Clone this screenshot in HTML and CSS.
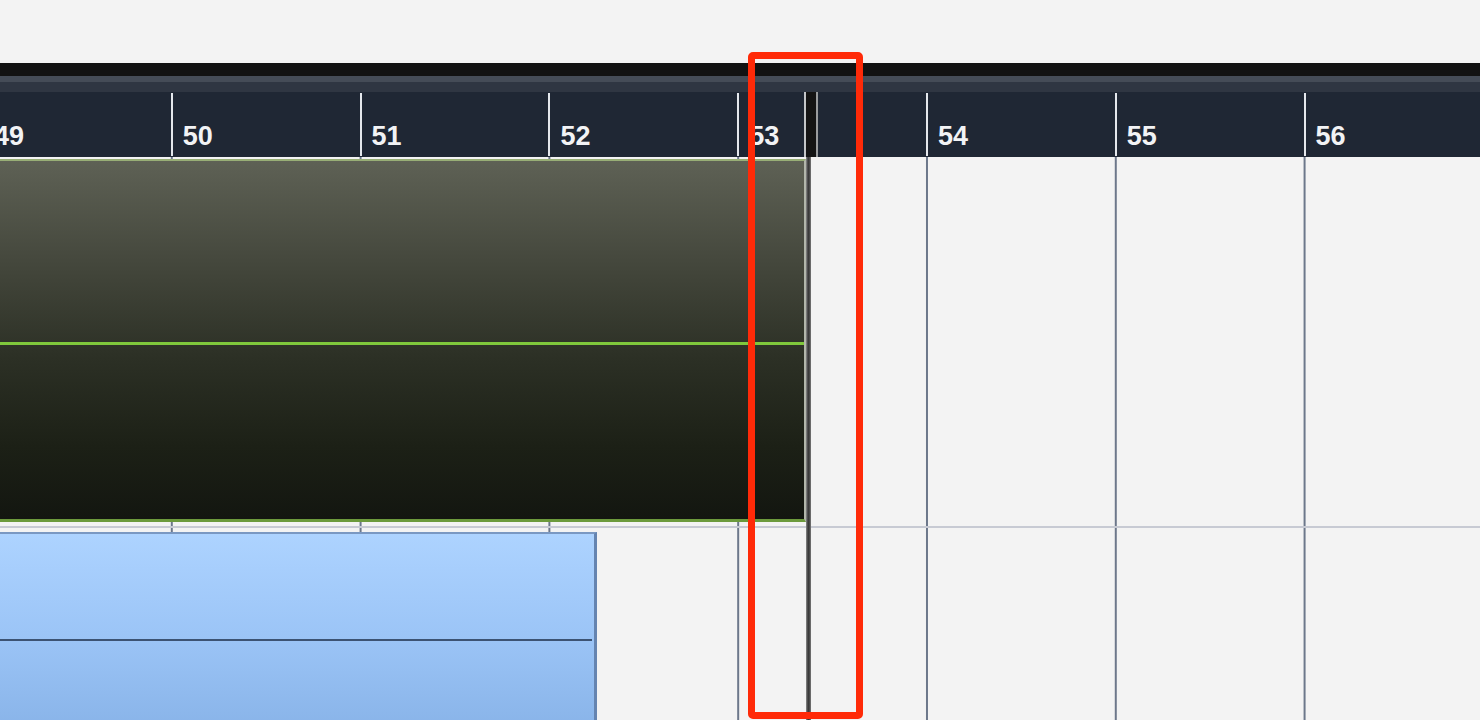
FILE: index.html
```html
<!DOCTYPE html>
<html lang="en">
<head>
    <meta charset="UTF-8">
    <title>Arrange</title>
    <link rel="stylesheet" href="styles.css">
</head>
<body>
    <div class="arrange">
        <div class="toolbar"></div>
        <div class="ruler-head"></div>

        <div class="ruler">
            <div class="bar"><span>49</span></div>
            <div class="bar"><span>50</span></div>
            <div class="bar"><span>51</span></div>
            <div class="bar"><span>52</span></div>
            <div class="bar"><span>53</span></div>
            <div class="bar"><span>54</span></div>
            <div class="bar"><span>55</span></div>
            <div class="bar"><span>56</span></div>
        </div>

        <div class="tracks">
            <!-- audio track -->
            <div class="track track-audio">
                <div class="clip clip-audio">
                    <div class="clip-line"></div>
                </div>
            </div>
            <!-- midi track -->
            <div class="track track-midi">
                <div class="clip clip-midi">
                    <div class="clip-line"></div>
                </div>
            </div>
        </div>

        <div class="playhead"></div>
    </div>

    <div class="callout"></div>
</body>
</html>
```

FILE: styles.css
```css
* {
    margin: 0;
    padding: 0;
    box-sizing: border-box;
}

body {
    font-family: "Liberation Sans", Arial, sans-serif;
    background-color: #f3f3f3;
    width: 1480px;
    height: 720px;
    overflow: hidden;
    padding-top: 63px;
}

.arrange {
    position: relative;
}

.toolbar {
    height: 13px;
    background-color: #121212;
}

.ruler-head {
    height: 16px;
    background-color: #2f3642;
    border-top: 6px solid #454c57;
}

.ruler {
    display: flex;
    height: 65px;
    background-color: #1f2734;
    margin-left: -18px;
}

.bar {
    flex: 0 0 188.8px;
    height: 63px;
    margin-top: 1px;
    border-left: 2px solid #e4e7ec;
    padding: 30px 0 0 10px;
}

.bar span {
    display: block;
    color: #f2f3f5;
    font-size: 27px;
    font-weight: bold;
    line-height: 27px;
}

/* one grid line per bar */
.tracks {
    height: 563px;
    background-image: linear-gradient(90deg, #6c778a 0 2px, transparent 2px);
    background-size: 188.8px 100%;
    background-repeat: repeat-x;
    background-position: -18px 0;
}

.track-audio {
    height: 371px;
    padding-top: 2px;
    border-bottom: 2px solid #c7cad3;
}

.track-midi {
    padding-top: 4px;
}

.clip {
    display: flex;
    flex-direction: column;
}

.clip-audio {
    width: 806px;
    height: 363px;
    background: linear-gradient(to bottom, #5e6155 0%, #43463b 30%, #2c3025 55%, #1c2016 80%, #131610 100%);
    border-top: 2px solid #98ae76;
    border-right: 2px solid #b2b6ab;
    border-bottom: 3px solid #6c9a3c;
}

.clip-audio .clip-line {
    margin-top: 181px;
    height: 3px;
    background-color: #80c83c;
}

.clip-midi {
    width: 597px;
    height: 200px;
    background: linear-gradient(to bottom, #add3ff 0%, #9cc5f7 50%, #88b3e8 100%);
    border-top: 2px solid #7a98c2;
    border-right: 3px solid #6584b0;
}

.clip-midi .clip-line {
    margin-top: 105px;
    width: 592px;
    height: 2px;
    background-color: #3c5373;
}

.playhead {
    position: absolute;
    top: 29px;
    left: 806px;
    width: 5px;
    height: 640px;
    background: linear-gradient(to right, #8c8c8c, #3a3a3a 40%, #3a3a3a 60%, #7a7a7a);
}

.playhead::before {
    content: "";
    position: absolute;
    top: 0;
    left: -2px;
    width: 10px;
    height: 65px;
    background-color: #141414;
    border-left: 2px solid #c4c6c8;
    border-right: 2px solid #9a9c9e;
}

.callout {
    position: absolute;
    left: 748px;
    top: 52px;
    width: 115px;
    height: 667px;
    border: 7px solid #ff2a08;
    border-radius: 5px;
}
```
